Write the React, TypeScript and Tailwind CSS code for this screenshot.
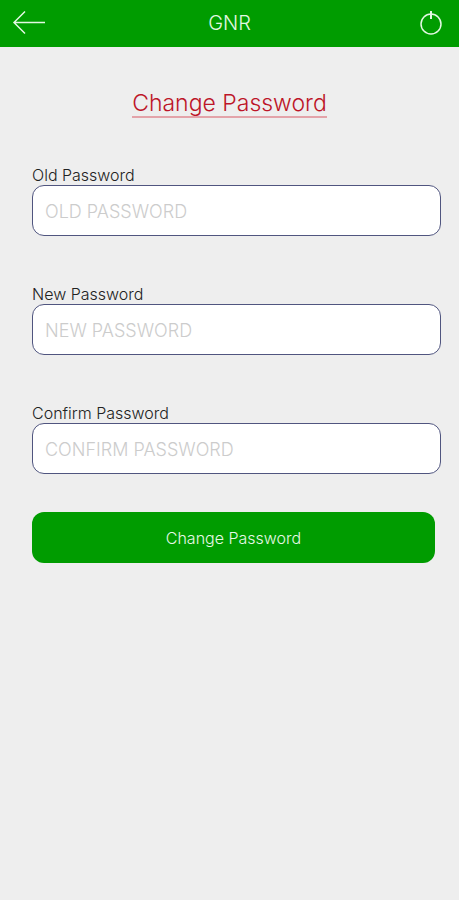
import { useState } from 'react';

const fields = [
  { id: 'old-password', label: 'Old Password', placeholder: 'OLD PASSWORD' },
  { id: 'new-password', label: 'New Password', placeholder: 'NEW PASSWORD' },
  { id: 'confirm-password', label: 'Confirm Password', placeholder: 'CONFIRM PASSWORD' },
];

const Header = () => (
  <header className="grid h-[47px] grid-cols-3 items-center bg-[#009c00] px-3 pb-0.5 text-[#e2f8e2]">
    <button type="button" aria-label="Back" className="justify-self-start">
      <svg width="34" height="24" viewBox="0 0 34 24" fill="none" stroke="currentColor" strokeWidth="1.5">
        <path d="M13 0.5 L2 11.5 L13 22.5 M2 11.5 H33" />
      </svg>
    </button>
    <h1 className="text-center text-xl font-light">GNR</h1>
    <button type="button" aria-label="Log out" className="justify-self-end">
      <svg width="32" height="26" viewBox="0 0 32 26" fill="none" stroke="currentColor">
        <circle cx="16" cy="14" r="10" strokeWidth="1.5" />
        <path d="M16 1 V9" strokeWidth="2" />
      </svg>
    </button>
  </header>
);

const App = () => {
  const [values, setValues] = useState<Record<string, string>>({});

  return (
    <div className="min-h-screen bg-[#eeeeee] font-['Inter',sans-serif]">
      <Header />
      <main className="pt-[43px] pb-8">
        <h2 className="text-center">
          <span className="inline-block border-b-2 border-b-[#e3a3a9] text-[23px] leading-[26px] font-light text-[#bd1528]">
            Change Password
          </span>
        </h2>
        <form className="mt-[47px] pr-[18px] pl-8" onSubmit={(e) => e.preventDefault()}>
          <div className="flex flex-col gap-12">
            {fields.map((field) => (
              <div key={field.id}>
                <label htmlFor={field.id} className="block text-base leading-5 font-light text-[#222222]">
                  {field.label}
                </label>
                <input
                  id={field.id}
                  type="password"
                  placeholder={field.placeholder}
                  value={values[field.id] ?? ''}
                  onChange={(e) => setValues({ ...values, [field.id]: e.target.value })}
                  className="block h-[51px] w-full rounded-xl border border-[#50557f] bg-white px-3 pt-0.5 text-lg font-light text-[#222222] placeholder:text-[#cccccc]"
                />
              </div>
            ))}
          </div>
          <div className="pt-[38px] pr-1.5">
            <button type="submit" className="h-[51px] w-full rounded-xl bg-[#009c00] text-base font-light text-[#e6f8e6]">
              Change Password
            </button>
          </div>
        </form>
      </main>
    </div>
  );
};

export default App;
